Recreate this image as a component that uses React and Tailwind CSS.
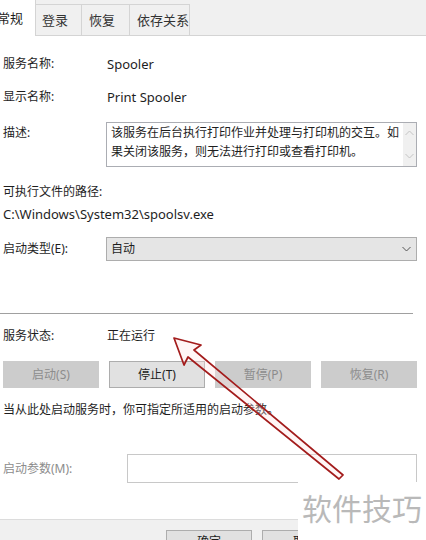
import React from 'react';

const font = { fontFamily: '"Noto Sans", "Noto Sans CJK SC", sans-serif' };

function Row({ label, children, className = '' }) {
  return (
    <div className={`flex items-center ${className}`}>
      <div className="w-[103px] shrink-0">{label}</div>
      <div className="flex-1">{children}</div>
    </div>
  );
}

function Chevron({ up = false, className = '' }) {
  return (
    <svg width="9" height="6" viewBox="0 0 9 6" className={className}>
      <path d={up ? 'M0.5 5 L4.5 1 L8.5 5' : 'M0.5 1 L4.5 5 L8.5 1'} fill="none" stroke="currentColor" strokeWidth="1" />
    </svg>
  );
}

export default function App() {
  return (
    <div
      className="relative w-[426px] h-[540px] overflow-hidden bg-white text-[12px] text-[#1e1e1e] leading-none"
      style={font}
    >
      {/* tab strip */}
      <div className="h-[36px] bg-[#f0f0f0] border-b border-[#d4d4d4] flex items-end">
        <div className="h-[36px] w-[36px] shrink-0 -mb-px bg-white border-r border-[#d4d4d4] flex items-center justify-end pr-[12px] pt-[1px] text-[13px] whitespace-nowrap">
          常规
        </div>
        <div className="h-[31px] w-[46px] border-r border-t border-[#d4d4d4] flex items-center pl-[6px] text-[13px] text-[#333]">
          登录
        </div>
        <div className="h-[31px] w-[48px] border-r border-t border-[#d4d4d4] flex items-center pl-[7px] text-[13px] text-[#333]">
          恢复
        </div>
        <div className="h-[31px] w-[60px] border-r border-t border-[#d4d4d4] flex items-center pl-[7px] text-[13px] text-[#333]">
          依存关系
        </div>
      </div>

      <div className="pl-[3px] pr-[9px]">
        <Row label="服务名称:" className="mt-[18px] h-[20px]">
          <span className="pl-[1px] text-[13px]">Spooler</span>
        </Row>
        <Row label="显示名称:" className="mt-[13px] h-[20px]">
          <span className="pl-[1px] text-[13px]">Print Spooler</span>
        </Row>

        <div className="flex mt-[15px]">
          <div className="w-[103px] shrink-0 pt-[5px]">描述:</div>
          <div className="flex-1 h-[45px] border border-[#abadb3] flex">
            <div className="flex-1 pl-[4px] leading-[19px]">
              该服务在后台执行打印作业并处理与打印机的交互。如果关闭该服务，则无法进行打印或查看打印机。
            </div>
            <div className="w-[13px] bg-[#f0f0f0] flex flex-col items-center justify-between py-[7px] text-[#c4c4c4]">
              <Chevron up />
              <Chevron />
            </div>
          </div>
        </div>

        <div className="mt-[15px] h-[20px] flex items-center">可执行文件的路径:</div>
        <div className="mt-[2px] h-[20px] flex items-center text-[13px]">C:\Windows\System32\spoolsv.exe</div>

        <Row label="启动类型(E):" className="mt-[13px] h-[24px]">
          <div className="h-[24px] bg-[#e5e5e5] border border-[#adadad] flex items-center justify-between pl-[4px] pr-[5px]">
            <span>自动</span>
            <Chevron className="text-[#555]" />
          </div>
        </Row>

        <div className="mt-[52px] mr-[4px] -ml-[3px] h-px bg-[#a0a0a0]" />

        <Row label="服务状态:" className="mt-[12px] h-[20px]">
          <span className="pl-[1px]">正在运行</span>
        </Row>

        <div className="mt-[15px] grid grid-cols-4 gap-[10px] h-[27px]">
          <div className="bg-[#cccccc] text-[#8c8c8c] flex items-center justify-center">启动(S)</div>
          <div className="bg-[#e1e1e1] border border-[#adadad] flex items-center justify-center">停止(T)</div>
          <div className="bg-[#cccccc] text-[#8c8c8c] flex items-center justify-center">暂停(P)</div>
          <div className="bg-[#cccccc] text-[#8c8c8c] flex items-center justify-center">恢复(R)</div>
        </div>

        <div className="mt-[12px] h-[20px] flex items-center">当从此处启动服务时，你可指定所适用的启动参数。</div>

        <div className="mt-[34px] flex items-center h-[29px]">
          <div className="w-[124px] shrink-0 text-[#8c8c8c]">启动参数(M):</div>
          <div className="flex-1 h-[29px] border border-[#c8c8c8]" />
        </div>
      </div>

      {/* bottom buttons */}
      <div className="absolute left-0 right-0 top-[519px] bottom-0 bg-[#f0f0f0] border-t border-[#dcdcdc]">
        <div className="flex gap-[10px] pl-[166px] pt-[10px]">
          <div className="w-[86px] h-[24px] bg-[#e1e1e1] border border-[#adadad] flex justify-center pt-[5px]">确定</div>
          <div className="w-[86px] h-[24px] bg-[#e1e1e1] border border-[#adadad] flex justify-center pt-[5px]">取消</div>
        </div>
      </div>

      {/* watermark */}
      <div className="absolute left-[298px] top-[482px] right-0 bottom-0 bg-white flex items-start pl-[4px] pt-[12px]">
        <span className="text-[30px] text-[#b9b9b9]">软件技巧</span>
      </div>

      {/* red arrow */}
      <svg className="absolute left-0 top-0 pointer-events-none" width="426" height="540">
        <polygon
          points="174,338 201,345 194,350 343,475 339,479 188,357 184,365"
          fill="rgba(255,225,225,0.35)"
          stroke="#a31c1c"
          strokeWidth="1.7"
          strokeLinejoin="round"
        />
      </svg>
    </div>
  );
}
